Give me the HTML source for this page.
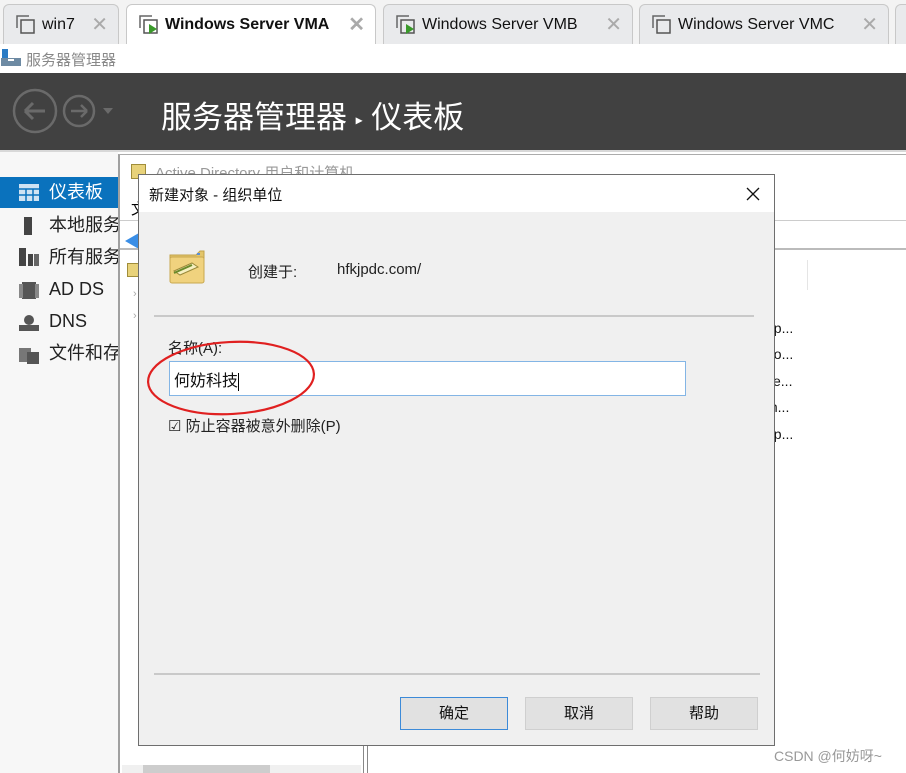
<!DOCTYPE html>
<html><head><meta charset="utf-8"><style>
*{margin:0;padding:0;box-sizing:border-box}
body{width:906px;height:773px;overflow:hidden;position:relative;background:#fff;font-family:"Liberation Sans","Noto Sans CJK SC",sans-serif}
.a{position:absolute}
.tab{position:absolute;top:4px;height:40px;border:1px solid #c8c8c8;border-bottom:none;border-radius:6px 6px 0 0;background:#e9eaec;font-size:16px;color:#111;line-height:40px}
.tab .x{position:absolute;right:10px;top:0;color:#aaa;font-size:20px}
.ico{position:absolute;left:12px;top:10px;width:20px;height:20px}
.side{position:absolute;left:0;width:118px;height:31px;font-size:18px;line-height:31px;color:#222;padding-left:49px;white-space:nowrap;overflow:hidden}
.btn{position:absolute;top:697px;width:108px;height:33px;background:#e1e1e1;border:1px solid #cfcfcf;font-size:15px;text-align:center;line-height:31px;color:#111}
.rt{position:absolute;left:766px;font-size:14px;color:#111}
</style></head><body>
<div class="a" style="left:0;top:0;width:906px;height:44px;background:#f3f3f3"></div>
<div class="tab" style="left:3px;width:116px;padding-left:38px"><svg class="ico" viewBox="0 0 20 20"><path d="M1 13V1h12" fill="none" stroke="#666" stroke-width="1.5"/><rect x="5" y="5" width="13" height="13" fill="none" stroke="#555" stroke-width="1.5"/></svg>win7<span class="x">✕</span></div>
<div class="tab" style="left:126px;width:250px;background:#fff;font-weight:bold;padding-left:38px"><svg class="ico" viewBox="0 0 20 20"><path d="M1 13V1h12" fill="none" stroke="#666" stroke-width="1.5"/><rect x="5" y="5" width="13" height="13" fill="none" stroke="#555" stroke-width="1.5"/><path d="M10 9l8 5-8 5z" fill="#3a9a2a"/></svg>Windows Server VMA<span class="x">✕</span></div>
<div class="tab" style="left:383px;width:250px;padding-left:38px"><svg class="ico" viewBox="0 0 20 20"><path d="M1 13V1h12" fill="none" stroke="#666" stroke-width="1.5"/><rect x="5" y="5" width="13" height="13" fill="none" stroke="#555" stroke-width="1.5"/><path d="M10 9l8 5-8 5z" fill="#3a9a2a"/></svg>Windows Server VMB<span class="x">✕</span></div>
<div class="tab" style="left:639px;width:250px;padding-left:38px"><svg class="ico" viewBox="0 0 20 20"><path d="M1 13V1h12" fill="none" stroke="#666" stroke-width="1.5"/><rect x="5" y="5" width="13" height="13" fill="none" stroke="#555" stroke-width="1.5"/></svg>Windows Server VMC<span class="x">✕</span></div>
<div class="tab" style="left:895px;width:20px"></div>
<div class="a" style="left:0;top:44px;width:906px;height:29px;background:#fff"></div>
<svg class="a" style="left:1px;top:49px" width="20" height="18"><rect x="1" y="0" width="6" height="10" fill="#2a7bc4"/><rect x="0" y="9" width="20" height="8" fill="#6d8aa3"/><rect x="7" y="10" width="6" height="2" fill="#fff"/></svg>
<div class="a" style="left:26px;top:49px;font-size:15px;color:#888">服务器管理器</div>
<div class="a" style="left:0;top:73px;width:906px;height:77px;background:#414141"></div>
<svg class="a" style="left:12px;top:87px" width="110" height="48"><circle cx="23" cy="24" r="21" fill="none" stroke="#6a6a6a" stroke-width="2.5"/><path d="M13 24h20M13 24l8-8M13 24l8 8" stroke="#6a6a6a" stroke-width="3" fill="none"/><circle cx="67" cy="24" r="15" fill="none" stroke="#6a6a6a" stroke-width="2.5"/><path d="M59 24h16M75 24l-6-6M75 24l-6 6" stroke="#6a6a6a" stroke-width="2.5" fill="none"/><path d="M91 21h10l-5 6z" fill="#6a6a6a"/></svg>
<div class="a" style="left:161px;top:92px;font-size:31px;color:#fff;white-space:nowrap">服务器管理器 <span style="font-size:14px;vertical-align:middle">▸</span> 仪表板</div>
<div class="a" style="left:0;top:150px;width:906px;height:2px;background:#d8d8d8"></div>
<div class="a" style="left:0;top:152px;width:118px;height:621px;background:#f7f7f7"></div>
<div class="side" style="top:177px;background:#0a72bd;color:#fff">仪表板</div>
<svg class="a" style="left:19px;top:184px" width="20" height="17"><rect width="20" height="17" fill="#cfe3f3"/><path d="M0 5h20M0 11h20M7 5v12M14 5v12" stroke="#0a72bd" stroke-width="1.5"/></svg>
<div class="side" style="top:210px">本地服务器</div><div class="a" style="left:24px;top:217px;width:8px;height:18px;background:#444"></div>
<div class="side" style="top:242px">所有服务器</div><svg class="a" style="left:19px;top:248px" width="20" height="18"><rect y="0" width="7" height="18" fill="#444"/><rect x="9" y="6" width="5" height="12" fill="#444"/><rect x="15" y="6" width="5" height="12" fill="#666"/></svg>
<div class="side" style="top:274px">AD DS</div><svg class="a" style="left:19px;top:281px" width="20" height="18"><rect x="3" y="1" width="14" height="17" fill="#555"/><rect x="0" y="3" width="4" height="14" fill="#888"/><rect x="16" y="3" width="4" height="14" fill="#888"/></svg>
<div class="side" style="top:306px">DNS</div><svg class="a" style="left:19px;top:314px" width="20" height="17"><circle cx="10" cy="6" r="5" fill="#555"/><rect y="11" width="20" height="6" fill="#555"/></svg>
<div class="side" style="top:338px">文件和存储</div><svg class="a" style="left:19px;top:346px" width="20" height="18"><rect y="2" width="12" height="14" fill="#777"/><rect x="8" y="6" width="12" height="12" fill="#555"/></svg>
<!-- back window -->
<div class="a" style="left:118px;top:154px;width:788px;height:619px;background:#fff;border-left:2px solid #a0a0a0;border-top:1px solid #ababab"></div>
<div class="a" style="left:131px;top:164px;width:15px;height:15px;background:#e8d27a;border:1px solid #a08d3a"></div>
<div class="a" style="left:155px;top:162px;font-size:15px;color:#999;white-space:nowrap">Active Directory 用户和计算机</div>
<div class="a" style="left:131px;top:198px;font-size:15px">文</div>
<div class="a" style="left:120px;top:220px;width:786px;height:1px;background:#ccc"></div>
<div class="a" style="left:124px;top:228px;color:#3a8ee6;font-size:16px">◀</div>
<div class="a" style="left:120px;top:248px;width:786px;height:2px;background:#bbb"></div>
<div class="a" style="left:127px;top:263px;width:14px;height:14px;background:#e8d27a;border:1px solid #a08d3a"></div>
<div class="a" style="left:133px;top:288px;color:#aaa;font-size:11px">›</div>
<div class="a" style="left:133px;top:310px;color:#aaa;font-size:11px">›</div>
<div class="a" style="left:807px;top:260px;width:1px;height:30px;background:#e5e5e5"></div>
<div class="rt" style="top:320px">up...</div><div class="rt" style="top:346px">do...</div><div class="rt" style="top:373px">se...</div><div class="rt" style="top:399px">m...</div><div class="rt" style="top:426px">up...</div>
<div class="a" style="left:363px;top:745px;width:1px;height:28px;background:#888"></div>
<div class="a" style="left:367px;top:745px;width:1px;height:28px;background:#888"></div>
<div class="a" style="left:122px;top:765px;width:239px;height:8px;background:#f0f0f0"></div>
<div class="a" style="left:143px;top:765px;width:127px;height:8px;background:#cdcdcd"></div>
<!-- dialog -->
<div class="a" style="left:138px;top:174px;width:637px;height:572px;background:#f0f0f0;border:1px solid #6e6e6e"></div>
<div class="a" style="left:139px;top:175px;width:635px;height:37px;background:#fff"></div>
<div class="a" style="left:149px;top:184px;font-size:15px;color:#111">新建对象 - 组织单位</div>
<svg class="a" style="left:746px;top:187px" width="14" height="14"><path d="M1 1L13 13M13 1L1 13" stroke="#111" stroke-width="1.3"/></svg>
<svg class="a" style="left:168px;top:249px" width="38" height="36"><path d="M2 6h26l4-4h4v30H2z" fill="#e3c56a" stroke="#c2a24a"/><rect x="2" y="8" width="34" height="26" rx="2" fill="#f0d27e" stroke="#c9a84f"/><path d="M6 22l18-8 6 4-18 8z" fill="#f6f0c0" stroke="#9a8a3a"/><path d="M6 24l18-8" stroke="#6a8a2a" stroke-width="2"/><rect x="29" y="4" width="3" height="2" fill="#5b8fd6"/></svg>
<div class="a" style="left:248px;top:261px;font-size:15px;color:#222">创建于:</div>
<div class="a" style="left:337px;top:261px;font-size:15px;color:#222">hfkjpdc.com/</div>
<div class="a" style="left:154px;top:315px;width:600px;height:2px;background:#c9c9c9"></div>
<div class="a" style="left:168px;top:337px;font-size:15px;color:#222">名称(A):</div>
<div class="a" style="left:169px;top:361px;width:517px;height:35px;background:#fff;border:1px solid #83b5e5"></div>
<div class="a" style="left:174px;top:367px;font-size:16px;color:#111">何妨科技<span style="display:inline-block;width:1px;height:18px;background:#000;vertical-align:middle"></span></div>
<div class="a" style="left:168px;top:415px;font-size:15px;color:#222">☑ 防止容器被意外删除(P)</div>
<svg class="a" style="left:140px;top:335px" width="190" height="90"><ellipse cx="91" cy="43" rx="83" ry="36" fill="none" stroke="#e02020" stroke-width="2.2" transform="rotate(-3 91 43)"/></svg>
<div class="a" style="left:154px;top:673px;width:606px;height:2px;background:#c9c9c9"></div>
<div class="btn" style="left:400px;border-color:#3c8ad8">确定</div>
<div class="btn" style="left:525px">取消</div>
<div class="btn" style="left:650px">帮助</div>
<div class="a" style="left:774px;top:746px;font-size:14px;color:#999">CSDN @何妨呀~</div>
</body></html>
